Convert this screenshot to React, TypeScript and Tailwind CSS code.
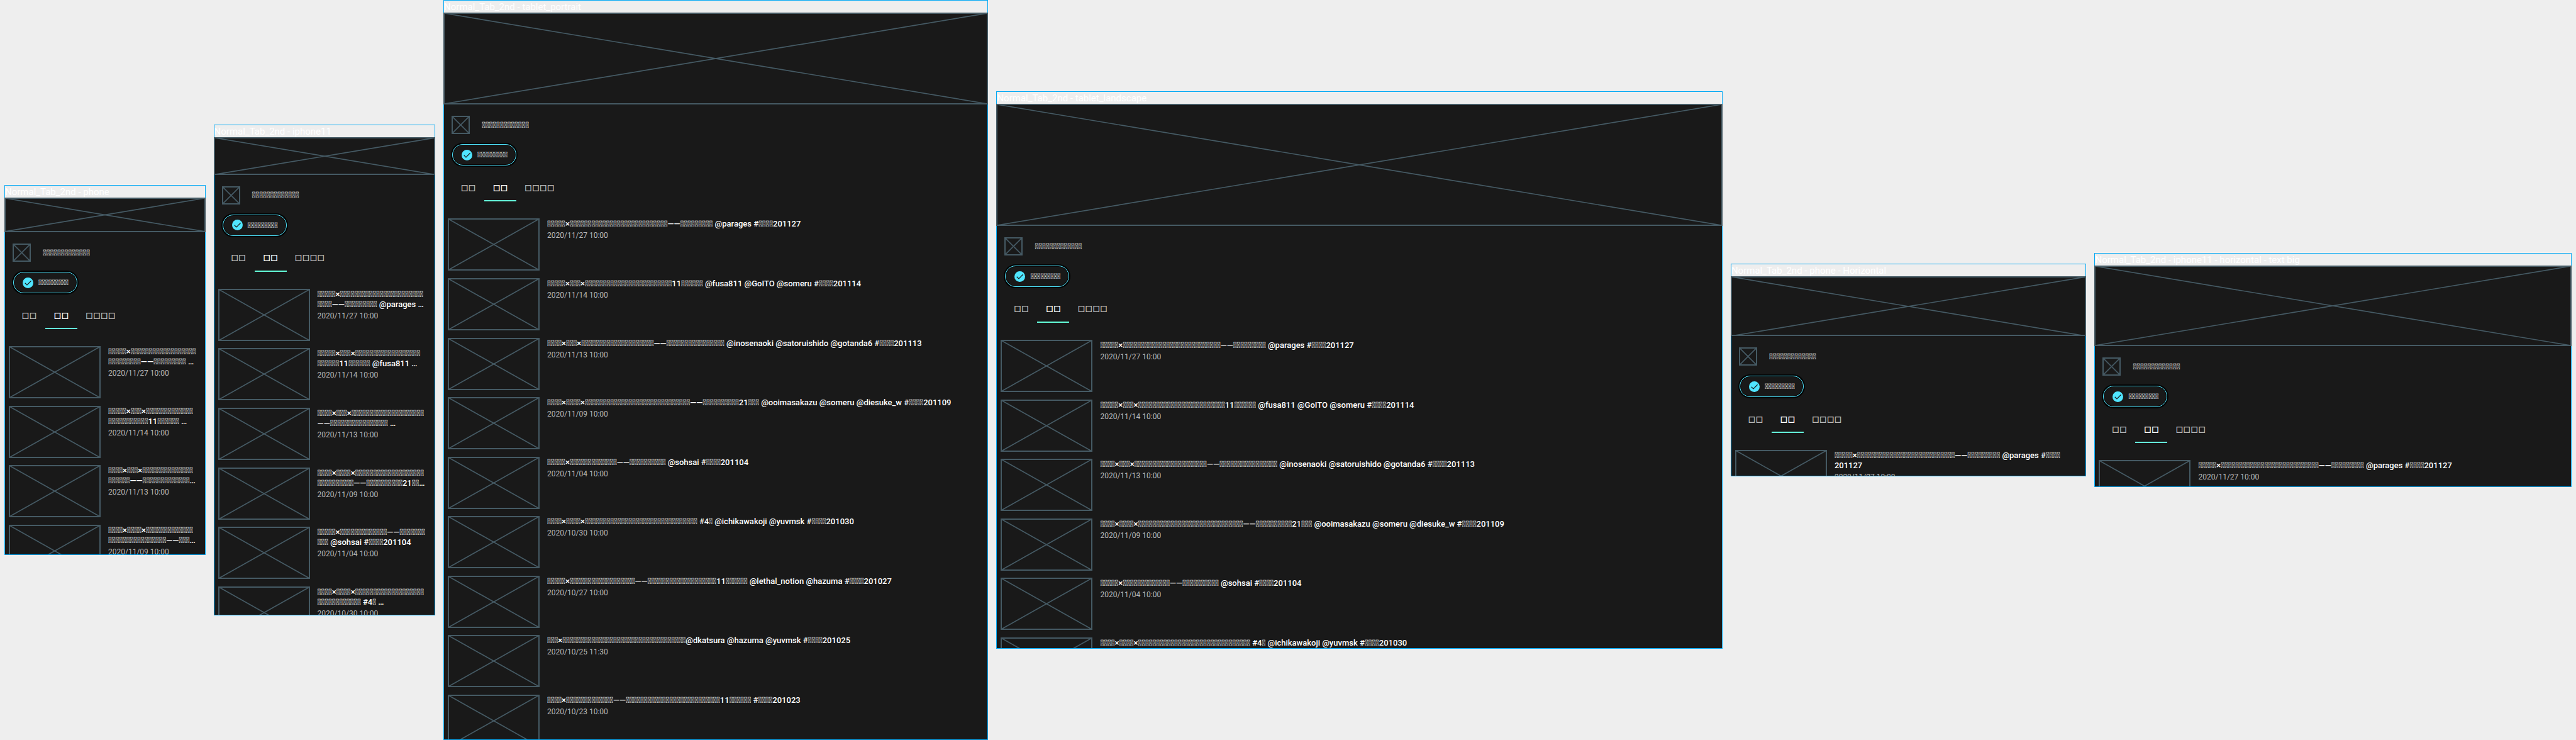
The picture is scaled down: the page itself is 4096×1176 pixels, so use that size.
type Device = {
  name: string;
  column: string;
  screen: string;
  rows: number;
  lines?: string[];
};

type Entry = { title: string; date: string };

const t = (count: number) => "\uE000".repeat(count);

const ENTRIES: Entry[] = [
  { title: `${t(5)}×${t(27)}——${t(9)} @parages #${t(4)}201127`, date: "2020/11/27 10:00" },
  { title: `${t(5)}×${t(3)}×${t(24)}11${t(6)} @fusa811 @GoITO @someru #${t(4)}201114`, date: "2020/11/14 10:00" },
  { title: `${t(4)}×${t(3)}×${t(20)}——${t(16)} @inosenaoki @satoruishido @gotanda6 #${t(4)}201113`, date: "2020/11/13 10:00" },
  { title: `${t(4)}×${t(4)}×${t(29)}——${t(10)}21${t(3)} @ooimasakazu @someru @diesuke_w #${t(4)}201109`, date: "2020/11/09 10:00" },
  { title: `${t(5)}×${t(13)}——${t(10)} @sohsai #${t(4)}201104`, date: "2020/11/04 10:00" },
  { title: `${t(4)}×${t(4)}×${t(31)} #4${t(1)} @ichikawakoji @yuvmsk #${t(4)}201030`, date: "2020/10/30 10:00" },
  { title: `${t(5)}×${t(18)}——${t(19)}11${t(6)} @lethal_notion @hazuma #${t(4)}201027`, date: "2020/10/27 10:00" },
  { title: `${t(3)}×${t(34)}@dkatsura @hazuma @yuvmsk #${t(4)}201025`, date: "2020/10/25 11:30" },
  { title: `${t(4)}×${t(13)}——${t(26)}11${t(6)} #${t(4)}201023`, date: "2020/10/23 10:00" },
];

// Two-line titles, already cut for the narrow screens.
const PHONE_LINES = [
  `${t(5)}×${t(18)}\n${t(9)}——${t(9)} …`,
  `${t(5)}×${t(3)}×${t(13)}\n${t(11)}11${t(6)} …`,
  `${t(4)}×${t(3)}×${t(14)}\n${t(6)}——${t(13)}…`,
  `${t(4)}×${t(4)}×${t(13)}\n${t(16)}——${t(3)}…`,
];

const IPHONE_LINES = [
  `${t(5)}×${t(23)}\n${t(4)}——${t(9)} @parages …`,
  `${t(5)}×${t(3)}×${t(18)}\n${t(6)}11${t(6)} @fusa811 …`,
  `${t(4)}×${t(3)}×${t(20)}\n——${t(16)} …`,
  `${t(4)}×${t(4)}×${t(19)}\n${t(10)}——${t(10)}21${t(2)}…`,
  `${t(5)}×${t(13)}——${t(7)}\n${t(3)} @sohsai #${t(4)}201104`,
  `${t(4)}×${t(4)}×${t(19)}\n${t(12)} #4${t(1)} …`,
];

const DEVICES: Device[] = [
  { name: "phone", column: "flex-[377_1_0%]", screen: "aspect-[377/668]", rows: 4, lines: PHONE_LINES },
  { name: "iphone11", column: "flex-[416_1_0%]", screen: "aspect-[416/897]", rows: 6, lines: IPHONE_LINES },
  { name: "tablet_portrait", column: "flex-[1026_1_0%]", screen: "aspect-[1026/1367]", rows: 9 },
  { name: "tablet_landscape", column: "flex-[1368_1_0%]", screen: "aspect-[1368/1025]", rows: 6 },
  {
    name: "phone - Horizontal",
    column: "flex-[669_1_0%]",
    screen: "aspect-[669/376]",
    rows: 1,
    lines: [`${t(5)}×${t(27)}——${t(9)} @parages #${t(4)}\n201127`],
  },
  { name: "iphone11 - horizontal - text big", column: "flex-[898_1_0%]", screen: "aspect-[898/415]", rows: 1 },
];

function Placeholder({ size }: { size: string }) {
  return (
    <div className={`${size} shrink-0 outline-2 -outline-offset-1 outline-[#455A64]`}>
      <svg className="block size-full" stroke="#455A64" strokeWidth="1.7" aria-hidden="true">
        <line x1="0" y1="0" x2="100%" y2="100%" />
        <line x1="0" y1="100%" x2="100%" y2="0" />
      </svg>
    </div>
  );
}

function FollowButton() {
  return (
    <button
      type="button"
      className="flex h-[34px] w-[102px] items-center gap-2 rounded-full border border-[#50E6FF] pl-[14px] text-xs text-white ring-2 ring-black inset-ring-1 inset-ring-black/60"
    >
      <svg className="size-[17px] shrink-0" viewBox="0 0 20 20" aria-hidden="true">
        <circle cx="10" cy="10" r="10" fill="#50E6FF" />
        <path d="M4.4 10.3 L8.2 14 L16 6.2" fill="none" stroke="#191919" strokeWidth="1.4" />
      </svg>
      {t(9)}
    </button>
  );
}

function Tabs() {
  const tabs = ["□□", "□□", "□□□□"];
  return (
    <div role="tablist" className="flex font-['Inter',sans-serif] text-[13px] font-medium">
      {tabs.map((label, index) => (
        <button
          key={index}
          type="button"
          role="tab"
          aria-selected={index === 1}
          className={
            index === 1
              ? "h-10 min-w-[51px] border-b-2 border-[#64FFDA] px-[13px] text-white"
              : "h-10 min-w-[51px] border-b-2 border-transparent px-[13px] text-white/70"
          }
        >
          {label}
        </button>
      ))}
    </div>
  );
}

function Row({ title, date }: Entry) {
  return (
    <li className="flex gap-[13px]">
      <Placeholder size="h-[81px] w-36" />
      <div className="whitespace-pre">
        <h3 className="text-[13px] leading-4 font-medium text-white">{title}</h3>
        <p className="mt-[3px] text-xs leading-[14px] text-white/70">{date}</p>
      </div>
    </li>
  );
}

function Panel({ device }: { device: Device }) {
  const { name, column, screen, rows, lines } = device;
  return (
    <article className={`${column} min-w-0 border border-[#03A9F4]`}>
      <h2 className="text-[15px] leading-5 whitespace-nowrap text-white">Normal_Tab_2nd - {name}</h2>
      <div className={`${screen} -mx-px -mt-px overflow-hidden bg-[#191919] bg-clip-content px-px pt-px`}>
        <Placeholder size="aspect-[6/1] w-full" />
        <div className="flex flex-col items-start pt-5 pl-[13px]">
          <div className="flex items-center gap-5">
            <Placeholder size="size-[27px]" />
            <span className="text-[13px] leading-4 font-medium text-white">{t(13)}</span>
          </div>
          <div className="py-[17px]">
            <FollowButton />
          </div>
          <Tabs />
        </div>
        <ul className="mt-7 grid h-[851px] grid-rows-9 pl-[7px]">
          {ENTRIES.slice(0, rows).map((entry, index) => (
            <Row key={entry.date} title={lines?.[index] ?? entry.title} date={entry.date} />
          ))}
        </ul>
      </div>
    </article>
  );
}

export default function App() {
  return (
    <main className="flex min-h-screen items-center gap-[13px] overflow-hidden bg-[#EEEEEE] px-[7px] font-['Roboto',sans-serif]">
      {DEVICES.map((device) => (
        <Panel key={device.name} device={device} />
      ))}
    </main>
  );
}
